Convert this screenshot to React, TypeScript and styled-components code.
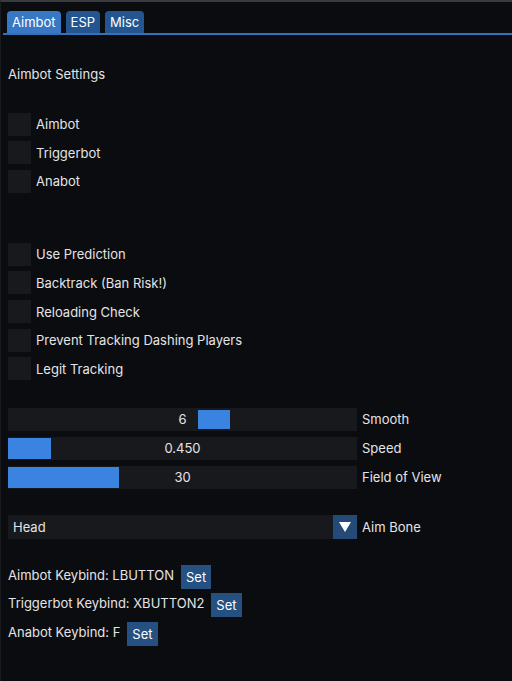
import styled, { createGlobalStyle } from "styled-components";

const Global = createGlobalStyle`
  html, body {
    margin: 0;
    padding: 0;
    background: #0b0c0f;
  }
  body {
    font-family: "Inter", "Noto Sans", sans-serif;
    font-size: 13px;
    color: #e4e4e6;
  }
`;

type SliderProps = {
  label: string;
  value: string;
  grab?: number;
  fill?: number;
};

const checksA = ["Aimbot", "Triggerbot", "Anabot"];
const checksB = [
  "Use Prediction",
  "Backtrack (Ban Risk!)",
  "Reloading Check",
  "Prevent Tracking Dashing Players",
  "Legit Tracking",
];

const keybinds = [
  { label: "Aimbot Keybind: LBUTTON" },
  { label: "Triggerbot Keybind: XBUTTON2" },
  { label: "Anabot Keybind: F" },
];

const SliderRow = (props: SliderProps) => {
  return (
    <Row>
      <Frame>
        {props.fill !== undefined && <Fill style={{ width: props.fill }} />}
        {props.grab !== undefined && <Grab style={{ left: props.grab }} />}
        <FrameValue>{props.value}</FrameValue>
      </Frame>
      <Label>{props.label}</Label>
    </Row>
  );
};

export default function App() {
  return (
    <Window>
      <Global />
      <TabBar>
        <Tab active>Aimbot</Tab>
        <Tab>ESP</Tab>
        <Tab>Misc</Tab>
      </TabBar>
      <Content>
        <Header>Aimbot Settings</Header>
        <Group>
          {checksA.map((c) => (
            <CheckRow key={c}>
              <Box />
              <span>{c}</span>
            </CheckRow>
          ))}
        </Group>
        <Group second>
          {checksB.map((c) => (
            <CheckRow key={c}>
              <Box />
              <span>{c}</span>
            </CheckRow>
          ))}
        </Group>
        <Sliders>
          <SliderRow label="Smooth" value="6" grab={190} />
          <SliderRow label="Speed" value="0.450" fill={43} />
          <SliderRow label="Field of View" value="30" fill={111} />
        </Sliders>
        <ComboRow>
          <Combo>
            <ComboText>Head</ComboText>
            <ComboArrow>
              <svg width="12" height="10" viewBox="0 0 12 10">
                <polygon points="0,0 12,0 6,10" fill="#ffffff" />
              </svg>
            </ComboArrow>
          </Combo>
          <Label>Aim Bone</Label>
        </ComboRow>
        <Keybinds>
          {keybinds.map((k) => (
            <KeyRow key={k.label}>
              <span>{k.label}</span>
              <SetButton>Set</SetButton>
            </KeyRow>
          ))}
        </Keybinds>
      </Content>
    </Window>
  );
}

const Window = styled.div`
  width: 512px;
  height: 681px;
  box-sizing: border-box;
  border-top: 2px solid #3a3b3f;
  border-left: 1px solid #1b1c20;
  background: #0b0c0f;
  overflow: hidden;
`;

const TabBar = styled.div`
  display: flex;
  gap: 5px;
  margin-top: 9px;
  margin-left: 2px;
  padding-left: 4px;
  border-bottom: 2px solid #3571b8;
`;

const Tab = styled.div<{ active?: boolean }>`
  height: 22px;
  line-height: 23px;
  padding: 0 5px;
  border-radius: 4px 4px 0 0;
  background: ${(p) => (p.active ? "#3877c3" : "#235690")};
  color: #ffffff;
  font-size: 13px;
`;

const Content = styled.div`
  padding: 0 7px;
`;

const Header = styled.div`
  margin-top: 31px;
  height: 16px;
  line-height: 16px;
`;

const Group = styled.div<{ second?: boolean }>`
  display: flex;
  flex-direction: column;
  gap: 4.67px;
  margin-top: ${(p) => (p.second ? "49px" : "30px")};
`;

const CheckRow = styled.div`
  display: flex;
  align-items: center;
  gap: 5px;
  height: 24px;
`;

const Box = styled.div`
  width: 23px;
  height: 23px;
  background: #18191d;
`;

const Sliders = styled.div`
  display: flex;
  flex-direction: column;
  gap: 6px;
  margin-top: 27px;
`;

const Row = styled.div`
  display: flex;
  align-items: center;
  gap: 5px;
`;

const ComboRow = styled(Row)`
  margin-top: 26px;
`;

const Frame = styled.div`
  position: relative;
  width: 349px;
  height: 23px;
  background: #18191d;
`;

const Fill = styled.div`
  position: absolute;
  left: 0;
  top: 1px;
  bottom: 1px;
  background: #3a83e0;
`;

const Grab = styled.div`
  position: absolute;
  top: 2px;
  bottom: 2px;
  width: 32px;
  background: #3a83e0;
`;

const FrameValue = styled.div`
  position: relative;
  text-align: center;
  line-height: 23px;
`;

const Label = styled.span``;

const Combo = styled.div`
  display: flex;
  width: 349px;
  height: 24px;
  background: #18191d;
`;

const ComboText = styled.div`
  flex: 1;
  padding-left: 5px;
  line-height: 24px;
`;

const ComboArrow = styled.div`
  width: 24px;
  display: flex;
  align-items: center;
  justify-content: center;
  background: #244a78;
`;

const Keybinds = styled.div`
  display: flex;
  flex-direction: column;
  gap: 4.5px;
  margin-top: 26px;
`;

const KeyRow = styled.div`
  display: flex;
  align-items: center;
  gap: 7px;
  height: 24px;

  & > span {
    margin-top: -4px;
  }
`;

const SetButton = styled.div`
  height: 24px;
  line-height: 25px;
  padding: 0 5px;
  background: #245082;
  color: #ffffff;
`;
